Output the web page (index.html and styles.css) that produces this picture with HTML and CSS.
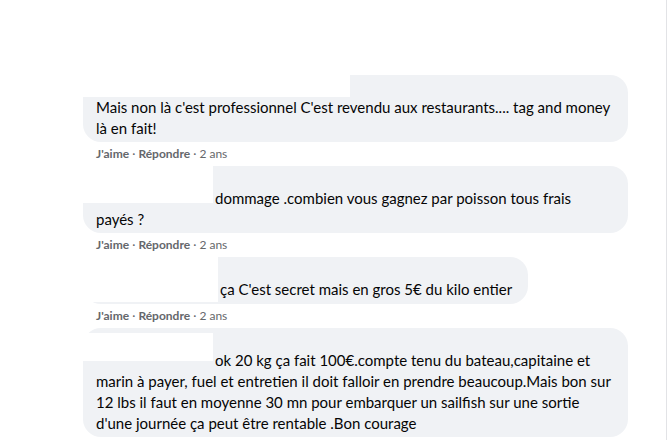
FILE: index.html
```html
<!DOCTYPE html>
<html lang="fr">

<head>
  <meta charset="UTF-8" />
  <title>Commentaires</title>
  <link rel="stylesheet" href="styles.css">
</head>

<body>
  <div class="page">
    <div class="thread">

      <div class="comment">
        <div class="bubble wide">
          <div class="author"></div>
          <p class="text">Mais non là c'est professionnel C'est revendu aux restaurants.... tag and money<br>là en fait!</p>
          <span class="redact redact-1"></span>
        </div>
        <div class="actions"><b>J'aime</b> · <b>Répondre</b> · 2 ans</div>
      </div>

      <div class="comment">
        <div class="bubble wide">
          <div class="author"></div>
          <p class="text"><span class="mention m-short"></span>dommage .combien vous gagnez par poisson tous frais<br>payés ?</p>
          <span class="redact redact-2"></span>
        </div>
        <div class="actions"><b>J'aime</b> · <b>Répondre</b> · 2 ans</div>
      </div>

      <div class="comment">
        <div class="bubble short">
          <div class="author"></div>
          <p class="text"><span class="mention m-long"></span>ça C'est secret mais en gros 5€ du kilo entier</p>
          <span class="redact redact-3"></span>
        </div>
        <div class="actions"><b>J'aime</b> · <b>Répondre</b> · 2 ans</div>
      </div>

      <div class="comment">
        <div class="bubble wide">
          <div class="author"></div>
          <p class="text"><span class="mention m-short"></span>ok 20 kg ça fait 100€.compte tenu du bateau,capitaine et<br>marin à payer, fuel et entretien il doit falloir en prendre beaucoup.Mais bon sur<br>12 lbs il faut en moyenne 30 mn pour embarquer un sailfish sur une sortie<br>d'une journée ça peut être rentable .Bon courage</p>
          <span class="redact redact-4"></span>
        </div>
      </div>

    </div>
  </div>
</body>

</html>
```

FILE: styles.css
```css
body {
  margin: 0;
  background: #fff;
  font-family: Lato, "Noto Sans", sans-serif;
  color: #050505;
}

.page {
  width: 666px;
  height: 440px;
  border-right: 1px solid #e2e3e6;
  overflow: hidden;
}

.thread {
  padding: 75px 0 0 83px;
}

.bubble {
  position: relative;
  display: inline-block;
  background: #f0f2f5;
  border-radius: 18px;
  padding: 8px 12px 3px 13px;
  box-sizing: border-box;
}

.bubble.wide {
  width: 545px;
}

.bubble.short {
  padding-right: 16px;
  padding-bottom: 4px;
}

.author {
  height: 14px;
}

.text {
  margin: 0;
  font-size: 15px;
  line-height: 21px;
  white-space: nowrap;
}

.mention {
  display: inline-block;
  height: 1px;
}

.m-short {
  width: 119px;
}

.m-long {
  width: 124px;
}

/* white boxes hiding the names */
.redact {
  position: absolute;
  left: 0;
  top: 0;
  background: #fff;
}

.redact-1 {
  width: 267px;
  height: 22px;
}

.redact-2 {
  width: 130px;
  height: 37px;
}

.redact-3 {
  width: 135px;
  height: 45px;
}

.redact-4 {
  top: 5px;
  width: 130px;
  height: 28px;
}

.actions {
  margin: 4px 0 4px 13px;
  height: 16px;
  font-size: 12px;
  line-height: 16px;
  color: #65676b;
}

.actions b {
  font-weight: 700;
}
```
